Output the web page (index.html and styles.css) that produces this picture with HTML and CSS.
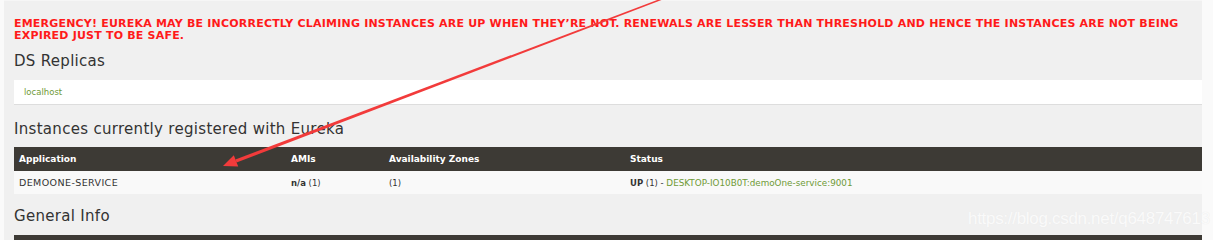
FILE: index.html
```html
<!DOCTYPE html>
<html lang="en">
<head>
    <meta charset="UTF-8">
    <meta name="viewport" content="width=device-width, initial-scale=1.0">
    <title>Eureka</title>
    <link rel="stylesheet" href="styles.css">
</head>
<body>
    <div class="page">
        <div class="alert">EMERGENCY! EUREKA MAY BE INCORRECTLY CLAIMING INSTANCES ARE UP WHEN THEY’RE NOT. RENEWALS ARE LESSER THAN THRESHOLD AND HENCE THE INSTANCES ARE NOT BEING EXPIRED JUST TO BE SAFE.</div>

        <h2 class="title">DS Replicas</h2>
        <div class="replicas">
            <a class="link" href="#">localhost</a>
        </div>

        <h2 class="title title-instances">Instances currently registered with Eureka</h2>
        <div class="table">
            <div class="row head">
                <div>Application</div>
                <div>AMIs</div>
                <div>Availability Zones</div>
                <div>Status</div>
            </div>
            <div class="row body">
                <div class="app-name">DEMOONE-SERVICE</div>
                <div><b>n/a</b> (1)</div>
                <div>(1)</div>
                <div><b>UP</b> (1) - <a class="link" href="#">DESKTOP-IO10B0T:demoOne-service:9001</a></div>
            </div>
        </div>

        <h2 class="title title-general">General Info</h2>
        <div class="table-top"></div>
    </div>

    <!-- annotation drawn over the screenshot -->
    <svg class="arrow" width="1213" height="240" viewBox="0 0 1213 240">
        <polygon fill="#f23b3b" points="662.3,-0.3 661.7,-1.7 235.4,159.4 236.6,162.6"/>
        <polygon fill="#f23b3b" points="223,166 233.8,155.3 238.2,166.5"/>
    </svg>
    <div class="watermark">https://blog.csdn.net/q648747613</div>
</body>
</html>
```

FILE: styles.css
```css
body {
    margin: 0;
    background-color: #fafafa;
    font-family: "DejaVu Sans", Verdana, sans-serif;
    color: #333;
    height: 240px;
    overflow: hidden;
    position: relative;
}
.page {
    margin-left: 4px;
    width: 1198px;
    padding-left: 10px;
    height: 240px;
    background-color: #f0f0f0;
    border-top: 1px solid #f6f6f6;
    box-sizing: border-box;
}
.alert {
    margin-top: 17px;
    font-size: 11px;
    line-height: 12px;
    font-weight: bold;
    letter-spacing: 0.2px;
    color: #ff1a1a;
    padding-right: 10px;
}
.title {
    margin: 10px 0 10px;
    font-size: 15px;
    line-height: 18px;
    font-weight: normal;
    letter-spacing: 0.3px;
    color: #333;
}
.title-instances {
    margin-top: 15px;
    margin-bottom: 9px;
}
.title-general {
    margin-top: 13px;
    margin-bottom: 10px;
}
.replicas {
    background-color: white;
    height: 25px;
    border-bottom: 1px solid #ddd;
    box-sizing: border-box;
    padding-left: 10px;
    display: flex;
    align-items: center;
}
.link {
    color: #6f9a37;
    text-decoration: none;
    font-size: 8.5px;
}
.row {
    display: grid;
    grid-template-columns: 272px 98px 241px 1fr;
    align-items: center;
}
.row > div {
    padding-left: 5px;
}
.head {
    background-color: #3d3a35;
    color: white;
    font-weight: bold;
    font-size: 9px;
    height: 24px;
}
.body {
    background-color: #f9f9f9;
    font-size: 8.5px;
    height: 23px;
    color: #333;
}
.body .link {
    font-size: 8.8px;
}
.app-name {
    font-size: 9.5px;
    letter-spacing: 0.4px;
}
.table-top {
    height: 5px;
    background-color: #3d3a35;
}
.arrow {
    position: absolute;
    top: 0;
    left: 0;
    pointer-events: none;
}
.watermark {
    position: absolute;
    left: 968px;
    top: 209px;
    font-family: "Liberation Sans", Arial, sans-serif;
    font-size: 17px;
    color: #fafafa;
    text-shadow: 0 0 1px #e8e8e8;
    letter-spacing: -0.3px;
}
```
